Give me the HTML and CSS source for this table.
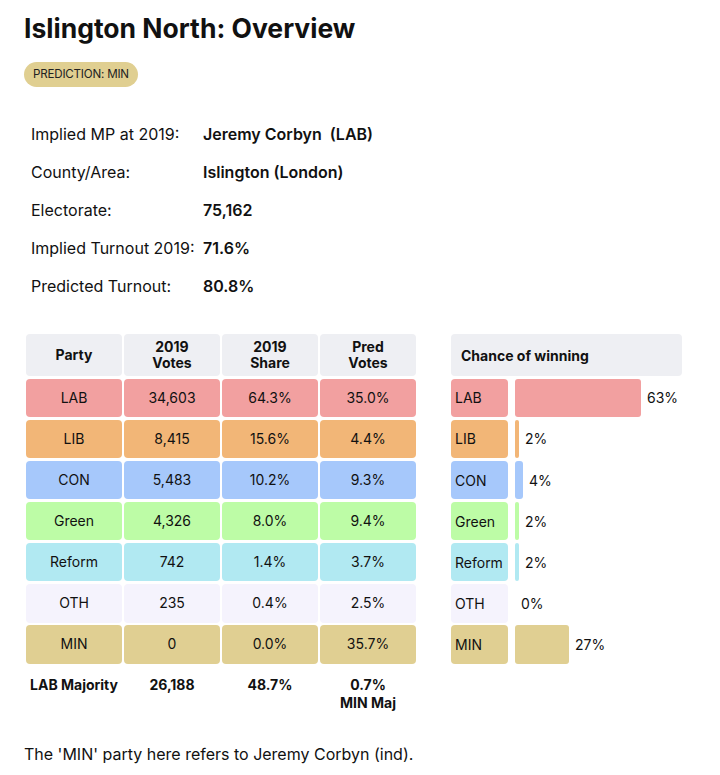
FILE: index.html
```html
<!DOCTYPE html>
<html lang="en">
<head>
<meta charset="utf-8">
<title>Islington North: Overview</title>
<link rel="stylesheet" href="styles.css">
</head>
<body>
<main class="page">
  <h1 class="title">Islington North: Overview</h1>
  <span class="badge">PREDICTION: MIN</span>

  <table class="info">
    <tr><td class="label">Implied MP at 2019:</td><td class="value">Jeremy Corbyn &nbsp;(LAB)</td></tr>
    <tr><td class="label">County/Area:</td><td class="value">Islington (London)</td></tr>
    <tr><td class="label">Electorate:</td><td class="value">75,162</td></tr>
    <tr><td class="label">Implied Turnout 2019:</td><td class="value">71.6%</td></tr>
    <tr><td class="label">Predicted Turnout:</td><td class="value">80.8%</td></tr>
  </table>

  <section class="tables">
    <div class="results">
      <div class="cell head">Party</div>
      <div class="cell head">2019<br>Votes</div>
      <div class="cell head">2019<br>Share</div>
      <div class="cell head">Pred<br>Votes</div>

      <div class="cell lab">LAB</div><div class="cell lab">34,603</div><div class="cell lab">64.3%</div><div class="cell lab">35.0%</div>
      <div class="cell lib">LIB</div><div class="cell lib">8,415</div><div class="cell lib">15.6%</div><div class="cell lib">4.4%</div>
      <div class="cell con">CON</div><div class="cell con">5,483</div><div class="cell con">10.2%</div><div class="cell con">9.3%</div>
      <div class="cell grn">Green</div><div class="cell grn">4,326</div><div class="cell grn">8.0%</div><div class="cell grn">9.4%</div>
      <div class="cell ref">Reform</div><div class="cell ref">742</div><div class="cell ref">1.4%</div><div class="cell ref">3.7%</div>
      <div class="cell oth">OTH</div><div class="cell oth">235</div><div class="cell oth">0.4%</div><div class="cell oth">2.5%</div>
      <div class="cell min">MIN</div><div class="cell min">0</div><div class="cell min">0.0%</div><div class="cell min">35.7%</div>

      <div class="maj">LAB Majority</div>
      <div class="maj">26,188</div>
      <div class="maj">48.7%</div>
      <div class="maj">0.7%<br>MIN Maj</div>
    </div>

    <div class="chance">
      <div class="chance-head">Chance of winning</div>
      <div class="crow"><div class="cname lab">LAB</div><div class="bar lab" style="width:126px"></div><span class="pct">63%</span></div>
      <div class="crow"><div class="cname lib">LIB</div><div class="bar lib" style="width:4px"></div><span class="pct">2%</span></div>
      <div class="crow"><div class="cname con">CON</div><div class="bar con" style="width:8px"></div><span class="pct">4%</span></div>
      <div class="crow"><div class="cname grn">Green</div><div class="bar grn" style="width:4px"></div><span class="pct">2%</span></div>
      <div class="crow"><div class="cname ref">Reform</div><div class="bar ref" style="width:4px"></div><span class="pct">2%</span></div>
      <div class="crow"><div class="cname oth">OTH</div><div class="bar" style="width:0px"></div><span class="pct">0%</span></div>
      <div class="crow"><div class="cname min">MIN</div><div class="bar min" style="width:54px"></div><span class="pct">27%</span></div>
    </div>
  </section>

  <p class="note">The 'MIN' party here refers to Jeremy Corbyn (ind).</p>
</main>
</body>
</html>
```
FILE: styles.css
```css
* { box-sizing: border-box; }

body {
  margin: 0;
  background: #fff;
  color: #111;
  font-family: Inter, "Noto Sans", sans-serif;
}

.page {
  padding: 0 24px;
}

.title {
  margin: 12px 0 0;
  font-size: 26.5px;
  line-height: 32px;
  font-weight: 700;
  letter-spacing: 0;
}

.badge {
  display: inline-block;
  margin-top: 18px;
  height: 25px;
  line-height: 25px;
  padding: 0 9px;
  border-radius: 13px;
  background: #e0cf91;
  font-size: 11.6px;
  letter-spacing: -0.2px;
  color: #222;
}

.info {
  margin-top: 28px;
  border-collapse: collapse;
  font-size: 16px;
}

.info td {
  height: 38px;
  padding: 0 0 0 7px;
}

.info .label {
  width: 172px;
}

.info .value {
  font-weight: 600;
}

.tables {
  display: flex;
  margin-top: 29px;
  gap: 35px;
  padding-left: 2px;
}

.results {
  display: grid;
  grid-template-columns: repeat(4, 96px);
  grid-template-rows: 42px repeat(7, 38.5px) auto;
  column-gap: 2px;
  row-gap: 2.6px;
  font-size: 14px;
}

.cell {
  display: flex;
  align-items: center;
  justify-content: center;
  text-align: center;
  border-radius: 4px;
  line-height: 16px;
}

.head {
  background: #eeeff3;
  font-weight: 700;
}

.lab { background: #f2a0a0; }
.lib { background: #f2b677; }
.con { background: #a6c8fb; }
.grn { background: #bdfca6; }
.ref { background: #b1e9f2; }
.oth { background: #f5f3fd; }
.min { background: #e0cf92; }

.maj {
  padding-top: 10px;
  text-align: center;
  font-weight: 700;
  line-height: 18px;
}

.chance {
  display: flex;
  flex-direction: column;
  gap: 2.6px;
  font-size: 14px;
}

.chance-head {
  width: 231px;
  height: 42px;
  display: flex;
  align-items: center;
  padding-left: 10px;
  background: #eeeff3;
  border-radius: 4px;
  font-weight: 700;
}

.crow {
  display: flex;
  align-items: center;
  height: 38.5px;
}

.cname {
  width: 57px;
  height: 100%;
  display: flex;
  align-items: center;
  padding-left: 4px;
  border-radius: 4px;
}

.bar {
  height: 100%;
  margin-left: 7px;
  border-radius: 3px;
}

.pct {
  margin-left: 6px;
}

.note {
  margin: 32px 0 0;
  font-size: 16px;
  line-height: 20px;
}
```
